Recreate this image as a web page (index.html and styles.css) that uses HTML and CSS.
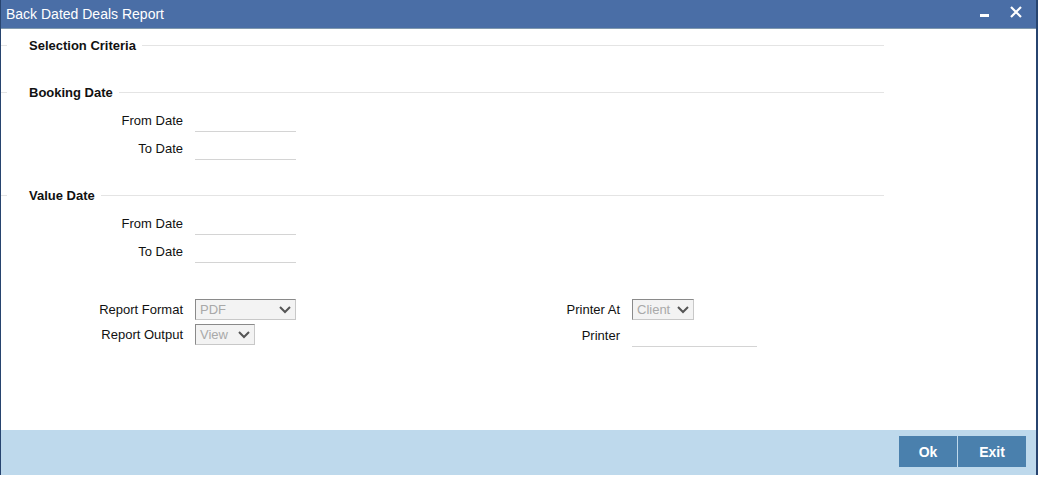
FILE: index.html
```html
<!DOCTYPE html>
<html lang="en">
<head>
    <meta charset="UTF-8">
    <title>Back Dated Deals Report</title>
    <link rel="stylesheet" href="styles.css">
</head>
<body>

<div class="window">
    <!-- Barra de título -->
    <div class="titlebar">
        <span class="title">Back Dated Deals Report</span>
        <span class="controls">
            <span class="minimize"></span>
            <svg class="close" width="12" height="12" viewBox="0 0 12 12">
                <path d="M1 1 L11 11 M11 1 L1 11" stroke="#fff" stroke-width="2.2" fill="none"/>
            </svg>
        </span>
    </div>

    <div class="content">
        <div class="section-head first"><span>Selection Criteria</span></div>

        <div class="section-head booking"><span>Booking Date</span></div>
        <div class="row"><label>From Date</label><div class="input"></div></div>
        <div class="row"><label>To Date</label><div class="input"></div></div>

        <div class="section-head value"><span>Value Date</span></div>
        <div class="row"><label>From Date</label><div class="input"></div></div>
        <div class="row"><label>To Date</label><div class="input"></div></div>

        <!-- Formato y salida -->
        <div class="report-grid">
            <label>Report Format</label>
            <div class="select wide"><span>PDF</span><svg width="12" height="8" viewBox="0 0 12 8"><path d="M1 1 L6 6 L11 1" stroke="#555" stroke-width="2" fill="none"/></svg></div>
            <label>Printer At</label>
            <div class="select client"><span>Client</span><svg width="12" height="8" viewBox="0 0 12 8"><path d="M1 1 L6 6 L11 1" stroke="#555" stroke-width="2" fill="none"/></svg></div>

            <label>Report Output</label>
            <div class="select view"><span>View</span><svg width="12" height="8" viewBox="0 0 12 8"><path d="M1 1 L6 6 L11 1" stroke="#555" stroke-width="2" fill="none"/></svg></div>
            <label class="printer-label">Printer</label>
            <div class="input printer"></div>
        </div>
    </div>

    <div class="footer">
        <button class="btn ok">Ok</button>
        <button class="btn exit">Exit</button>
    </div>
</div>

</body>
</html>
```

FILE: styles.css
```css
body {
    margin: 0;
    font-family: "Liberation Sans", Arial, sans-serif;
    background: #fff;
    color: #111;
}
.window {
    width: 1038px;
    height: 475px;
    border-left: 1px solid #27446f;
    border-right: 2px solid #27446f;
    display: flex;
    flex-direction: column;
    box-sizing: border-box;
}
.titlebar {
    height: 28px;
    background-color: #4a6ea6;
    border-bottom: 1px solid #7f98ae;
    display: flex;
    align-items: center;
    justify-content: space-between;
    padding: 0 14px 0 5px;
    color: #fff;
}
.title {
    font-size: 14px;
}
.controls {
    display: flex;
    align-items: center;
    gap: 21px;
    margin-top: -4px;
}
.minimize {
    width: 9px;
    height: 3px;
    background: #fff;
    margin-top: 7px;
}
.content {
    flex: 1;
    font-size: 13px;
}
.section-head {
    width: 883px;
    height: 20px;
    display: flex;
    align-items: center;
    font-weight: bold;
}
.section-head::before {
    content: "";
    width: 6px;
    border-top: 1px solid #e4e4e4;
    margin-right: 22px;
}
.section-head::after {
    content: "";
    flex: 1;
    border-top: 1px solid #e4e4e4;
    margin-left: 6px;
}
.section-head.first {
    margin-top: 6px;
}
.section-head.booking {
    margin-top: 27px;
    margin-bottom: 4px;
}
.section-head.value {
    margin-top: 23px;
    margin-bottom: 4px;
}
.row {
    height: 28px;
    display: flex;
    align-items: center;
}
.row label {
    width: 182px;
    text-align: right;
    margin-right: 12px;
}
.input {
    width: 101px;
    height: 22px;
    border-bottom: 1px solid #d4d4d4;
    box-sizing: border-box;
    margin-top: 2px;
}
.report-grid {
    margin-top: 34px;
    display: grid;
    grid-template-columns: 182px 200px 213px auto;
    grid-template-rows: 21px 21px;
    column-gap: 12px;
    row-gap: 4px;
    align-items: center;
}
.report-grid label {
    text-align: right;
}
.report-grid .printer-label {
    margin-top: 2px;
}
.select {
    height: 21px;
    box-sizing: border-box;
    background: #f3f3f3;
    border: 1px solid #c8c8c8;
    border-top-color: #8a8a8a;
    border-left-color: #8a8a8a;
    display: flex;
    align-items: center;
    justify-content: space-between;
    padding: 0 4px 0 4px;
    color: #a9a9a9;
}
.select.wide {
    width: 101px;
}
.select.view {
    width: 60px;
}
.select.client {
    width: 62px;
}
.input.printer {
    width: 125px;
    margin-top: 2px;
}
.footer {
    height: 45px;
    background-color: #bed9ec;
    display: flex;
    justify-content: flex-end;
    align-items: flex-start;
    padding: 6px 10px 0 0;
    box-sizing: border-box;
    gap: 1px;
}
.btn {
    height: 31px;
    border: none;
    background-color: #4a80ad;
    color: #fff;
    font-family: "Liberation Sans", Arial, sans-serif;
    font-weight: bold;
    font-size: 14px;
    padding: 0;
}
.btn.ok {
    width: 58px;
}
.btn.exit {
    width: 68px;
}
```
